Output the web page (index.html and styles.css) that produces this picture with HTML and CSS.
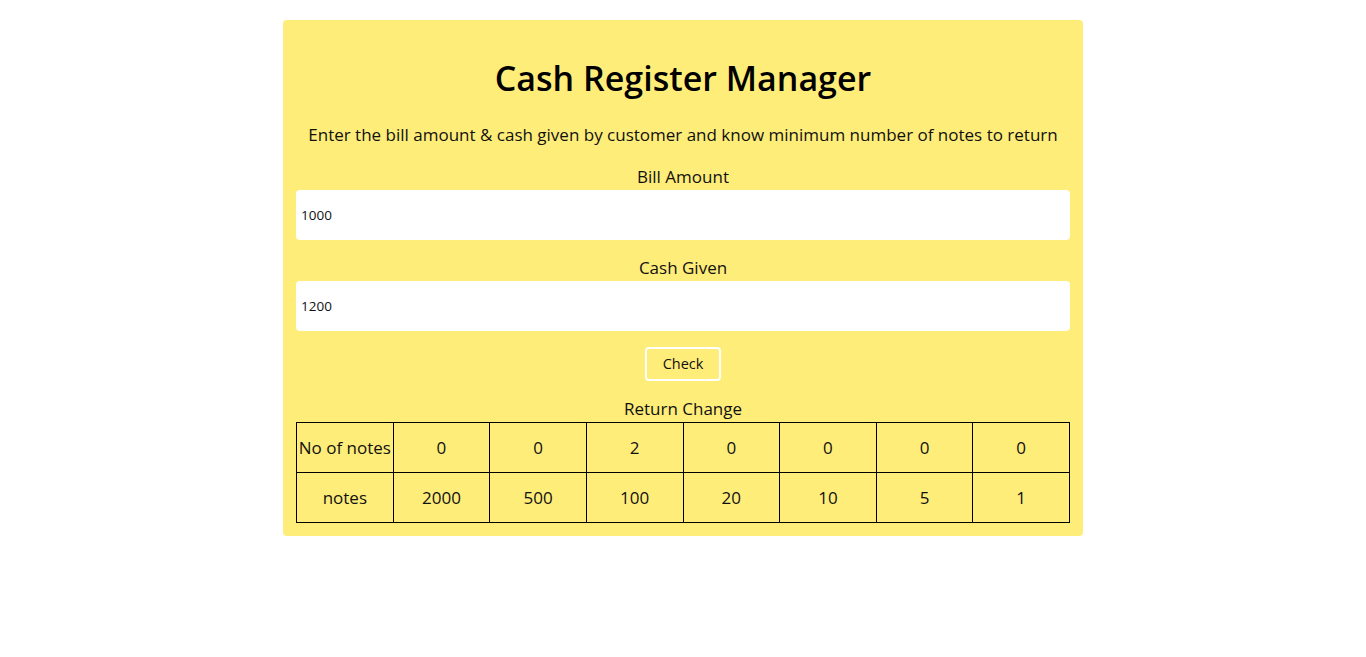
FILE: index.html
```html
<!DOCTYPE html>
<html lang="en">
<head>
<meta charset="utf-8">
<title>Cash Register Manager</title>
<link rel="stylesheet" href="styles.css">
</head>
<body>
<main class="card">
  <h1 class="title">Cash Register Manager</h1>
  <p class="subtitle">Enter the bill amount &amp; cash given by customer and know minimum number of notes to return</p>
  <label class="label" for="bill">Bill Amount</label>
  <input class="field" id="bill" type="number" value="1000">
  <label class="label label-gap" for="cash">Cash Given</label>
  <input class="field" id="cash" type="number" value="1200">
  <button class="check" type="button">Check</button>
  <div class="label">Return Change</div>
  <table class="change">
    <tr><td>No of notes</td><td>0</td><td>0</td><td>2</td><td>0</td><td>0</td><td>0</td><td>0</td></tr>
    <tr><td>notes</td><td>2000</td><td>500</td><td>100</td><td>20</td><td>10</td><td>5</td><td>1</td></tr>
  </table>
</main>
</body>
</html>
```
FILE: styles.css
```css
html, body {
  margin: 0;
  padding: 0;
  background: #ffffff;
}
body {
  font-family: "Open Sans", "DejaVu Sans", sans-serif;
  color: #111;
}
.card {
  width: 800px;
  box-sizing: border-box;
  margin: 20px auto 0;
  padding: 13px 13px 13px;
  background: #ffed7a;
  border-radius: 4px;
  display: flex;
  flex-direction: column;
  align-items: center;
}
.title {
  margin: 21px 0 21px;
  font-size: 34px;
  line-height: 48px;
  font-weight: 600;
  color: #000;
}
.subtitle {
  margin: 0 0 18px;
  font-size: 17px;
  line-height: 24px;
}
.label {
  display: block;
  font-size: 17px;
  line-height: 24px;
  margin-bottom: 1px;
}
.label-gap {
  margin-top: 16px;
}
.field {
  width: 100%;
  height: 50px;
  box-sizing: border-box;
  border: none;
  border-radius: 4px;
  background: #fff;
  padding: 0 5px;
  font-family: inherit;
  font-size: 13.5px;
  color: #111;
  outline: none;
  -moz-appearance: textfield;
}
.field::-webkit-outer-spin-button,
.field::-webkit-inner-spin-button {
  -webkit-appearance: none;
  margin: 0;
}
.check {
  margin: 16px 0 16px;
  width: 76px;
  height: 34px;
  box-sizing: border-box;
  border: 2px solid #fff;
  border-radius: 4px;
  background: transparent;
  font-family: inherit;
  font-size: 14.5px;
  line-height: 20px;
  padding: 0;
  color: #111;
}
.change {
  width: 100%;
  border-collapse: collapse;
  table-layout: fixed;
}
.change td {
  border: 1px solid #000;
  height: 50px;
  padding: 0;
  text-align: center;
  font-size: 17px;
  box-sizing: border-box;
}
```
